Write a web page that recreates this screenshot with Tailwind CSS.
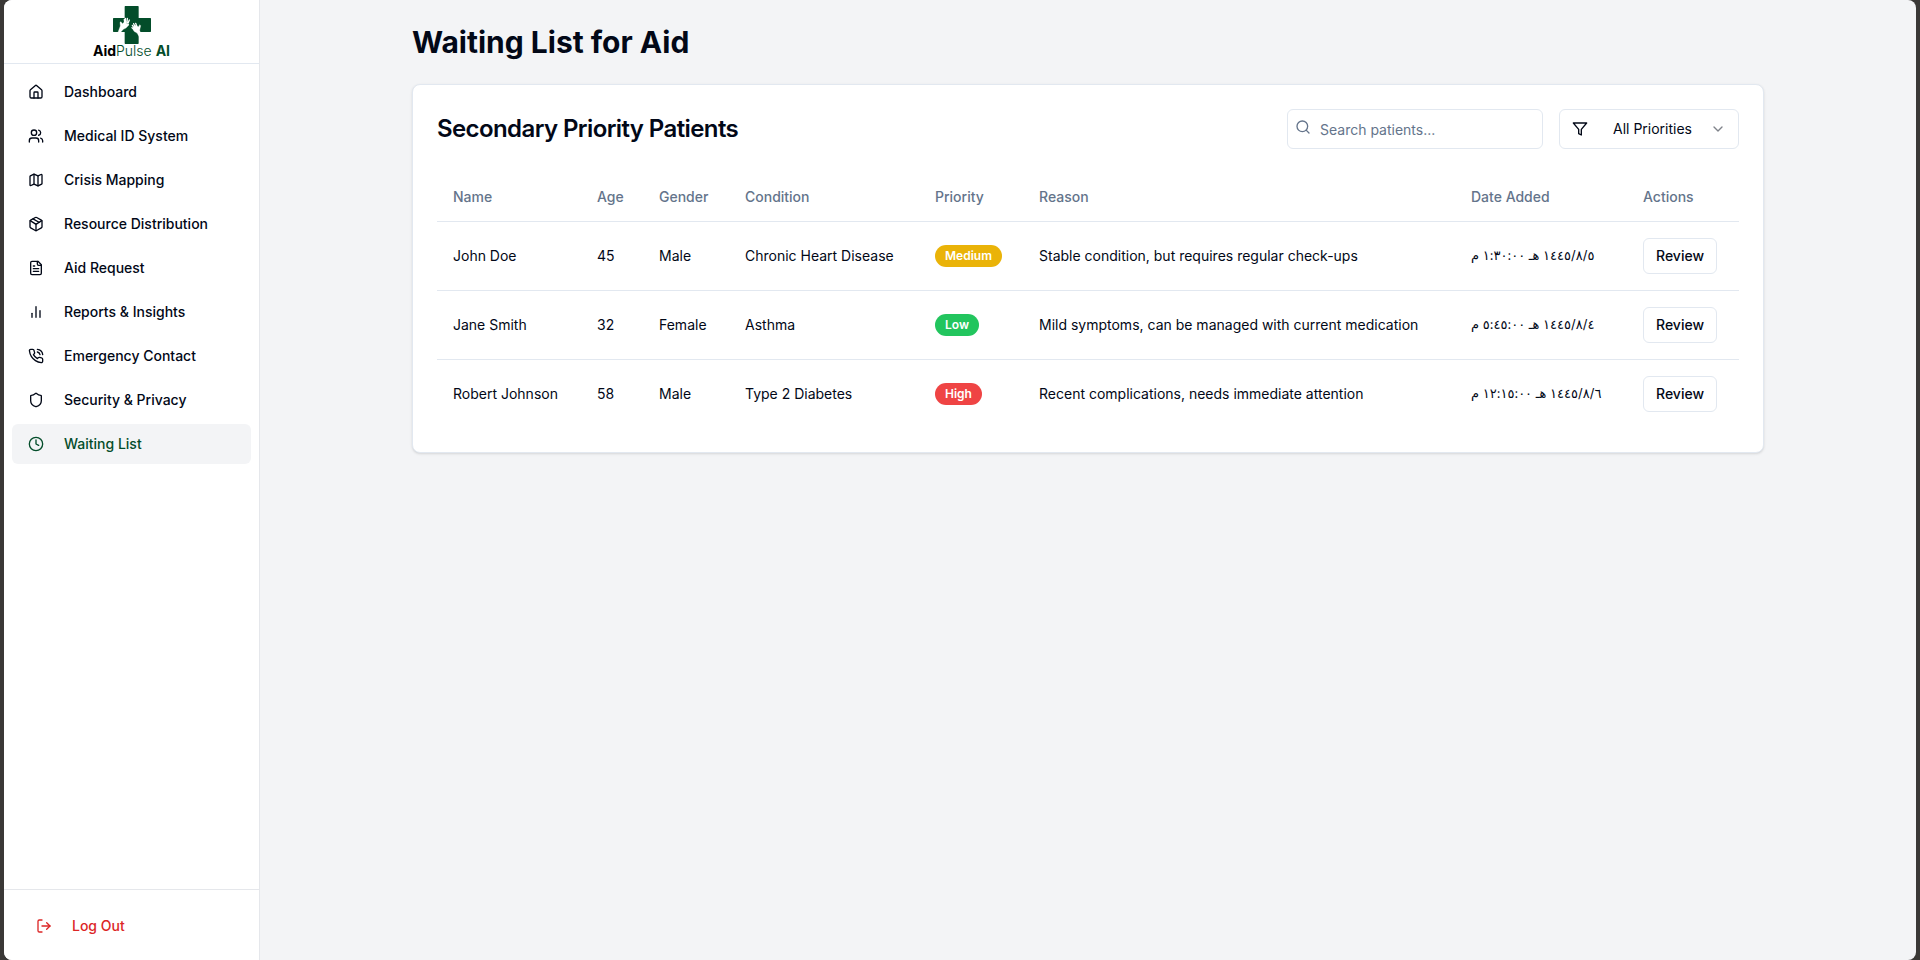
<!DOCTYPE html>
<html lang="en">
<head>
<meta charset="utf-8">
<title>Waiting List for Aid</title>
<script src="https://cdn.jsdelivr.net/npm/@tailwindcss/browser@4"></script>
</head>
<body class="bg-[#3a3836] px-1 font-[Inter,'DejaVu_Sans',sans-serif] text-sm text-[#020817]">
<svg class="hidden" aria-hidden="true">
  <symbol id="home" viewBox="0 0 24 24"><path d="M15 21v-8a1 1 0 0 0-1-1h-4a1 1 0 0 0-1 1v8"/><path d="M3 10a2 2 0 0 1 .709-1.528l7-5.999a2 2 0 0 1 2.582 0l7 5.999A2 2 0 0 1 21 10v9a2 2 0 0 1-2 2H5a2 2 0 0 1-2-2z"/></symbol>
  <symbol id="users" viewBox="0 0 24 24"><path d="M16 21v-2a4 4 0 0 0-4-4H6a4 4 0 0 0-4 4v2"/><circle cx="9" cy="7" r="4"/><path d="M22 21v-2a4 4 0 0 0-3-3.87"/><path d="M16 3.13a4 4 0 0 1 0 7.75"/></symbol>
  <symbol id="map" viewBox="0 0 24 24"><path d="M14.106 5.553a2 2 0 0 0 1.788 0l3.659-1.83A1 1 0 0 1 21 4.619v12.764a1 1 0 0 1-.553.894l-4.553 2.277a2 2 0 0 1-1.788 0l-4.212-2.106a2 2 0 0 0-1.788 0l-3.659 1.83A1 1 0 0 1 3 19.381V6.618a1 1 0 0 1 .553-.894l4.553-2.277a2 2 0 0 1 1.788 0z"/><path d="M15 5.764v15"/><path d="M9 3.236v15"/></symbol>
  <symbol id="package" viewBox="0 0 24 24"><path d="M11 21.73a2 2 0 0 0 2 0l7-4A2 2 0 0 0 21 16V8a2 2 0 0 0-1-1.73l-7-4a2 2 0 0 0-2 0l-7 4A2 2 0 0 0 3 8v8a2 2 0 0 0 1 1.73z"/><path d="M12 22V12"/><path d="m3.3 7 7.703 4.734a2 2 0 0 0 1.994 0L20.7 7"/><path d="m7.5 4.27 9 5.15"/></symbol>
  <symbol id="file" viewBox="0 0 24 24"><path d="M15 2H6a2 2 0 0 0-2 2v16a2 2 0 0 0 2 2h12a2 2 0 0 0 2-2V7Z"/><path d="M14 2v4a2 2 0 0 0 2 2h4"/><path d="M10 9H8"/><path d="M16 13H8"/><path d="M16 17H8"/></symbol>
  <symbol id="chart" viewBox="0 0 24 24"><path d="M18 20V10"/><path d="M12 20V4"/><path d="M6 20v-6"/></symbol>
  <symbol id="phone" viewBox="0 0 24 24"><path d="M22 16.92v3a2 2 0 0 1-2.18 2 19.79 19.79 0 0 1-8.63-3.07 19.5 19.5 0 0 1-6-6 19.79 19.79 0 0 1-3.07-8.67A2 2 0 0 1 4.11 2h3a2 2 0 0 1 2 1.72 12.84 12.84 0 0 0 .7 2.81 2 2 0 0 1-.45 2.11L8.09 9.91a16 16 0 0 0 6 6l1.27-1.27a2 2 0 0 1 2.11-.45 12.84 12.84 0 0 0 2.81.7A2 2 0 0 1 22 16.92z"/><path d="M14.05 2a9 9 0 0 1 8 7.94"/><path d="M14.05 6A5 5 0 0 1 18 10"/></symbol>
  <symbol id="shield" viewBox="0 0 24 24"><path d="M20 13c0 5-3.5 7.5-7.66 8.95a1 1 0 0 1-.67-.01C7.5 20.5 4 18 4 13V6a1 1 0 0 1 1-1c2 0 4.5-1.2 6.24-2.72a1.17 1.17 0 0 1 1.52 0C14.51 3.81 17 5 19 5a1 1 0 0 1 1 1z"/></symbol>
  <symbol id="clock" viewBox="0 0 24 24"><circle cx="12" cy="12" r="10"/><path d="M12 6v6l4 2"/></symbol>
  <symbol id="logout" viewBox="0 0 24 24"><path d="M9 21H5a2 2 0 0 1-2-2V5a2 2 0 0 1 2-2h4"/><path d="m16 17 5-5-5-5"/><path d="M21 12H9"/></symbol>
  <symbol id="search" viewBox="0 0 24 24"><circle cx="11" cy="11" r="8"/><path d="m21 21-4.3-4.3"/></symbol>
  <symbol id="filter" viewBox="0 0 24 24"><path d="M22 3H2l8 9.46V19l4 2v-8.54z"/></symbol>
  <symbol id="chevron" viewBox="0 0 24 24"><path d="m6 9 6 6 6-6"/></symbol>
</svg>
<div class="flex min-h-screen overflow-hidden rounded-lg bg-[#f3f4f6]">
  <aside class="flex w-64 shrink-0 flex-col border-r border-[#e5e7eb] bg-white">
    <div class="flex h-16 flex-col items-center border-b border-[#e2e8f0] pt-1.5">
      <svg class="size-[38px] shrink-0" viewBox="0 0 114 114" aria-hidden="true">
        <path fill="#034d2a" d="M37 0h38q2 0 2 2v34h35q2 0 2 2v38q0 2-2 2H77v34q0 2-2 2H37q-2 0-2-2V78H2q-2 0-2-2V38q0-2 2-2h33V2q0-2 2-2z"/>
        <g fill="#fff" stroke="#fff" stroke-linecap="round" stroke-linejoin="round">
          <path stroke-width="1" d="M15 79l7-19-1-11 3-2 4 6 7-6 12 9-8 10-8 4-8 9z"/>
          <path fill="none" stroke-width="4" d="M35 50l-1-10M38 49l-1-12M42 50l1-13M45 52l4-10M46 56l-7 6"/>
          <path stroke-width="1" d="M78 91l-6-10-9-5-4-8 8-10 10 4 3-6 3 3-2 9-1 5 3 9z"/>
          <path fill="none" stroke-width="4" d="M62 69l-5-4M63 65l-5-7M66 62l-4-9M71 60l-3-8"/>
        </g>
      </svg>
      <div class="text-sm leading-[14px] text-[#034d2a]"><span class="font-bold text-black">Aid</span><span class="font-light">Pulse</span> <span class="font-bold">AI</span></div>
    </div>
    <nav class="flex flex-1 flex-col gap-1 p-2 font-medium" aria-label="Main">
      <a href="#" class="flex h-10 items-center gap-5 rounded-md px-4"><svg class="size-4 fill-none stroke-current stroke-2 [stroke-linecap:round] [stroke-linejoin:round]"><use href="#home"/></svg>Dashboard</a>
      <a href="#" class="flex h-10 items-center gap-5 rounded-md px-4"><svg class="size-4 fill-none stroke-current stroke-2 [stroke-linecap:round] [stroke-linejoin:round]"><use href="#users"/></svg>Medical ID System</a>
      <a href="#" class="flex h-10 items-center gap-5 rounded-md px-4"><svg class="size-4 fill-none stroke-current stroke-2 [stroke-linecap:round] [stroke-linejoin:round]"><use href="#map"/></svg>Crisis Mapping</a>
      <a href="#" class="flex h-10 items-center gap-5 rounded-md px-4"><svg class="size-4 fill-none stroke-current stroke-2 [stroke-linecap:round] [stroke-linejoin:round]"><use href="#package"/></svg>Resource Distribution</a>
      <a href="#" class="flex h-10 items-center gap-5 rounded-md px-4"><svg class="size-4 fill-none stroke-current stroke-2 [stroke-linecap:round] [stroke-linejoin:round]"><use href="#file"/></svg>Aid Request</a>
      <a href="#" class="flex h-10 items-center gap-5 rounded-md px-4"><svg class="size-4 fill-none stroke-current stroke-2 [stroke-linecap:round] [stroke-linejoin:round]"><use href="#chart"/></svg>Reports &amp; Insights</a>
      <a href="#" class="flex h-10 items-center gap-5 rounded-md px-4"><svg class="size-4 fill-none stroke-current stroke-2 [stroke-linecap:round] [stroke-linejoin:round]"><use href="#phone"/></svg>Emergency Contact</a>
      <a href="#" class="flex h-10 items-center gap-5 rounded-md px-4"><svg class="size-4 fill-none stroke-current stroke-2 [stroke-linecap:round] [stroke-linejoin:round]"><use href="#shield"/></svg>Security &amp; Privacy</a>
      <a href="#" aria-current="page" class="flex h-10 items-center gap-5 rounded-md bg-[#f3f4f6] px-4 text-[#034d2a]"><svg class="size-4 fill-none stroke-current stroke-2 [stroke-linecap:round] [stroke-linejoin:round]"><use href="#clock"/></svg>Waiting List</a>
    </nav>
    <div class="border-t border-[#e5e7eb] px-4 pt-4 pb-3.5">
      <button type="button" class="flex h-10 w-full items-center gap-5 rounded-md px-4 font-medium text-[#dc2626]"><svg class="size-4 fill-none stroke-current stroke-2 [stroke-linecap:round] [stroke-linejoin:round]"><use href="#logout"/></svg>Log Out</button>
    </div>
  </aside>
  <main class="min-w-0 flex-1">
    <div class="mx-auto flex max-w-[1400px] flex-col gap-6 p-6">
      <h1 class="text-3xl font-bold">Waiting List for Aid</h1>
      <section class="rounded-lg border border-[#e2e8f0] bg-white p-6 shadow-sm">
        <div class="flex items-center justify-between pb-6">
          <h2 class="text-2xl font-semibold tracking-tight">Secondary Priority Patients</h2>
          <div class="flex gap-4">
            <div class="relative">
              <svg class="absolute top-2.5 left-2 size-4 fill-none stroke-[#64748b] stroke-2 [stroke-linecap:round] [stroke-linejoin:round]"><use href="#search"/></svg>
              <input type="text" aria-label="Search patients" placeholder="Search patients..." class="h-10 w-64 rounded-md border border-[#e2e8f0] bg-white pr-3 pl-8 placeholder:text-[#64748b]">
            </div>
            <div class="relative">
              <svg class="pointer-events-none absolute top-3 left-[13px] size-4 fill-none stroke-current stroke-2 [stroke-linecap:round] [stroke-linejoin:round]"><use href="#filter"/></svg>
              <select aria-label="Priority filter" class="h-10 w-[180px] appearance-none rounded-md border border-[#e2e8f0] bg-white pl-[53px]">
                <option>All Priorities</option><option>High</option><option>Medium</option><option>Low</option>
              </select>
              <svg class="pointer-events-none absolute top-3 right-[13px] size-4 fill-none stroke-current stroke-2 opacity-50 [stroke-linecap:round] [stroke-linejoin:round]"><use href="#chevron"/></svg>
            </div>
          </div>
        </div>
        <table class="w-full text-left [&_td]:h-[69px] [&_td]:px-4 [&_th]:h-12 [&_th]:px-4 [&_th]:font-medium">
          <thead class="text-[#64748b]">
            <tr class="border-b border-[#e2e8f0]"><th scope="col" class="w-36">Name</th><th scope="col" class="w-[62px]">Age</th><th scope="col" class="w-[86px]">Gender</th><th scope="col" class="w-[190px]">Condition</th><th scope="col" class="w-[104px]">Priority</th><th scope="col">Reason</th><th scope="col" class="w-[172px]">Date Added</th><th scope="col" class="w-28">Actions</th></tr>
          </thead>
          <tbody>
            <tr class="border-b border-[#e2e8f0]"><td>John Doe</td><td>45</td><td>Male</td><td>Chronic Heart Disease</td>
              <td><span class="inline-flex rounded-full bg-[#eab308] px-2.5 py-[3px] text-xs font-semibold text-white">Medium</span></td>
              <td>Stable condition, but requires regular check-ups</td><td lang="ar" class="text-[13px]">٥&rlm;/٨&rlm;/١٤٤٥ هـ ١:٣٠:٠٠ م</td>
              <td><button type="button" class="h-9 rounded-md border border-[#e2e8f0] bg-white px-3 font-medium">Review</button></td></tr>
            <tr class="border-b border-[#e2e8f0]"><td>Jane Smith</td><td>32</td><td>Female</td><td>Asthma</td>
              <td><span class="inline-flex rounded-full bg-[#22c55e] px-2.5 py-[3px] text-xs font-semibold text-white">Low</span></td>
              <td>Mild symptoms, can be managed with current medication</td><td lang="ar" class="text-[13px]">٤&rlm;/٨&rlm;/١٤٤٥ هـ ٥:٤٥:٠٠ م</td>
              <td><button type="button" class="h-9 rounded-md border border-[#e2e8f0] bg-white px-3 font-medium">Review</button></td></tr>
            <tr><td>Robert Johnson</td><td>58</td><td>Male</td><td>Type 2 Diabetes</td>
              <td><span class="inline-flex rounded-full bg-[#ef4444] px-2.5 py-[3px] text-xs font-semibold text-white">High</span></td>
              <td>Recent complications, needs immediate attention</td><td lang="ar" class="text-[13px]">٦&rlm;/٨&rlm;/١٤٤٥ هـ ١٢:١٥:٠٠ م</td>
              <td><button type="button" class="h-9 rounded-md border border-[#e2e8f0] bg-white px-3 font-medium">Review</button></td></tr>
          </tbody>
        </table>
      </section>
    </div>
  </main>
</div>
</body>
</html>
